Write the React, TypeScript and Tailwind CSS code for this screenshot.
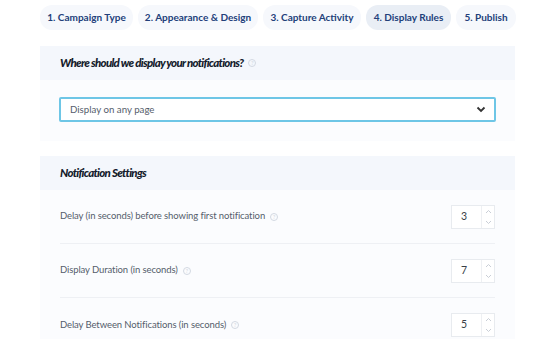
import React from 'react';

const TABS = [
  { label: '1. Campaign Type', width: 'w-[93px]', active: false },
  { label: '2. Appearance & Design', width: 'w-[120px]', active: false },
  { label: '3. Capture Activity', width: 'w-[98px]', active: false },
  { label: '4. Display Rules', width: 'w-[85px]', active: true },
  { label: '5. Publish', width: 'w-[60px]', active: false },
];

const SETTINGS = [
  { label: 'Delay (in seconds) before showing first notification', value: 3 },
  { label: 'Display Duration (in seconds)', value: 7 },
  { label: 'Delay Between Notifications (in seconds)', value: 5 },
];

function HelpDot() {
  return (
    <span className="ml-[5px] inline-flex h-[8px] w-[8px] items-center justify-center rounded-full border border-[#d3d9e2] text-[6px] leading-none text-[#d3d9e2]">
      ?
    </span>
  );
}

function NumberBox({ value }: { value: number }) {
  return (
    <div className="flex h-[24px] w-[44px] border border-[#e8ebef] bg-white">
      <div className="flex flex-1 items-center pl-[9px] text-[10.5px] text-[#3a3f47]">{value}</div>
      <div className="flex w-[13px] flex-col items-center justify-between border-l border-[#eef0f3] py-[3px] text-[#c9ced6]">
        <svg width="7" height="5" viewBox="0 0 7 5" fill="none" stroke="currentColor" strokeWidth="1">
          <path d="M1 4l2.5-2.5L6 4" />
        </svg>
        <svg width="7" height="5" viewBox="0 0 7 5" fill="none" stroke="currentColor" strokeWidth="1">
          <path d="M1 1l2.5 2.5L6 1" />
        </svg>
      </div>
    </div>
  );
}

export default function App() {
  return (
    <div className="h-[339px] w-[550px] overflow-hidden bg-white font-['Lato',sans-serif]">
      {/* Step tabs */}
      <div className="flex gap-[5px] pl-[40px] pt-[5px]">
        {TABS.map((tab) => (
          <div
            key={tab.label}
            className={`flex h-[25px] shrink-0 items-center justify-center whitespace-nowrap rounded-[12px] text-[10px] font-bold text-[#22407a] ${tab.width} ${
              tab.active ? 'bg-[#e9eef5]' : 'bg-[#f6f8fc]'
            }`}
          >
            {tab.label}
          </div>
        ))}
      </div>

      {/* Where to display */}
      <div className="ml-[40px] mt-[16px] w-[475px] bg-[#fbfcfe]">
        <div className="flex h-[34px] items-center bg-[#f4f7fc] px-[20px]">
          <span className="text-[11.5px] font-black italic tracking-[-0.7px] text-[#151c2c]">
            Where should we display your notifications?
          </span>
          <HelpDot />
        </div>
        <div className="px-[19px] pb-[19px] pt-[17px]">
          <div className="flex h-[25px] items-center justify-between rounded-[2px] border-2 border-[#6ec6e6] bg-white pl-[9px] pr-[8px]">
            <span className="text-[9.7px] text-[#555d6b]">Display on any page</span>
            <svg width="10" height="7" viewBox="0 0 10 7" fill="none" stroke="#333" strokeWidth="1.8">
              <path d="M1.5 1.5L5 5l3.5-3.5" />
            </svg>
          </div>
        </div>
      </div>

      {/* Notification settings */}
      <div className="ml-[40px] mt-[15px] w-[475px] bg-[#fbfcfe]">
        <div className="flex h-[34px] items-center bg-[#f4f7fc] px-[20px]">
          <span className="text-[11.5px] font-black italic tracking-[-0.7px] text-[#151c2c]">
            Notification Settings
          </span>
        </div>
        <div className="px-[20px]">
          {SETTINGS.map((s, i) => (
            <div
              key={s.label}
              className={`flex h-[54px] items-center justify-between ${
                i < SETTINGS.length - 1 ? 'border-b border-[#eef0f4]' : ''
              }`}
            >
              <div className="flex items-center text-[9.5px] tracking-[-0.1px] text-[#555d6b]">
                {s.label}
                <HelpDot />
              </div>
              <NumberBox value={s.value} />
            </div>
          ))}
        </div>
      </div>
    </div>
  );
}
